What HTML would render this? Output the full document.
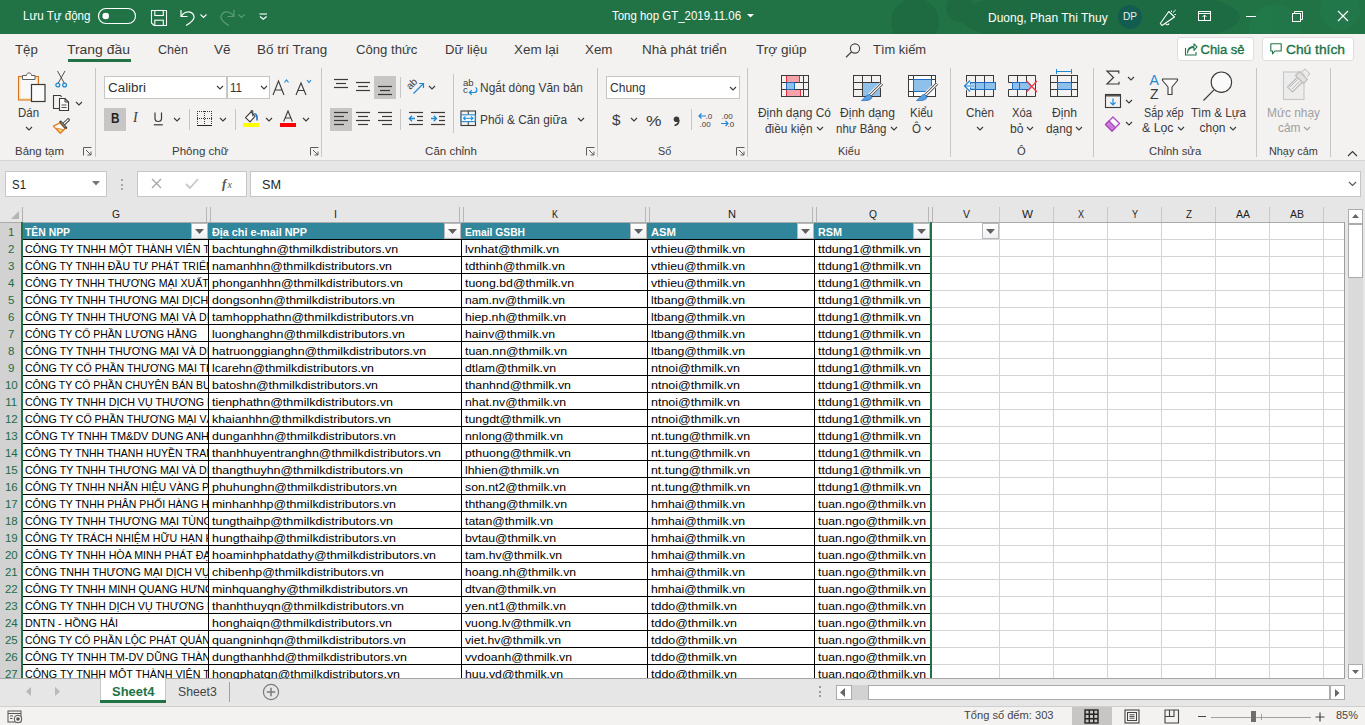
<!DOCTYPE html>
<html><head><meta charset="utf-8"><title>Excel</title>
<style>
html,body{margin:0;padding:0;}
body{width:1365px;height:725px;overflow:hidden;position:relative;background:#fff;font-family:"Liberation Sans", sans-serif;}
.t{position:absolute;white-space:pre;line-height:1;transform-origin:0 0;}
svg{overflow:visible}
</style></head><body>
<div style="position:absolute;left:0px;top:0px;width:1365px;height:34px;background:#217346;"></div>
<div style="position:absolute;left:0px;top:34px;width:1365px;height:126px;background:#f3f2f1;"></div>
<div style="position:absolute;left:0px;top:160px;width:1365px;height:1px;background:#d6d6d6;"></div>
<div style="position:absolute;left:0px;top:161px;width:1365px;height:46px;background:#e6e6e6;"></div>
<div style="position:absolute;left:0px;top:207px;width:1345px;height:15px;background:#e6e6e6;"></div>
<div style="position:absolute;left:0px;top:222px;width:1345px;height:1px;background:#ababab;"></div>
<div style="position:absolute;left:0px;top:223px;width:21px;height:455px;background:#d2d2d2;"></div>
<div style="position:absolute;left:21px;top:222px;width:2px;height:456px;background:#217346;"></div>
<div style="position:absolute;left:23px;top:223px;width:1321px;height:455px;background:#ffffff;"></div>
<div style="position:absolute;left:1344px;top:222px;width:1px;height:457px;background:#9c9c9c;"></div>
<div style="position:absolute;left:0px;top:678px;width:1345px;height:1px;background:#a6a6a6;"></div>
<div style="position:absolute;left:1345px;top:207px;width:20px;height:471px;background:#e6e6e6;"></div>
<svg style="position:absolute;left:0;top:0;overflow:hidden" width="1365" height="34"><g fill="#1d6840" opacity="0.7"><ellipse cx="1100" cy="17" rx="140" ry="30"/><circle cx="915" cy="22" r="24"/><circle cx="960" cy="8" r="14"/></g><g fill="#22794a" opacity="0.8"><circle cx="1275" cy="30" r="26"/><circle cx="1340" cy="10" r="20"/></g></svg>
<div class="t" style="left:23.00px;top:10.44px;font-size:12px;color:#fff;transform:scaleX(0.9658);">Lưu Tự động</div>
<svg style="position:absolute;left:98px;top:8px;" width="38" height="16" viewBox="0 0 38 16"><rect x="0.5" y="0.5" width="37" height="15" rx="7.5" fill="none" stroke="#fff" stroke-width="1.2"/><circle cx="7.7" cy="8" r="3.3" fill="#fff"/></svg>
<svg style="position:absolute;left:150px;top:9px;" width="18" height="18" viewBox="0 0 18 18"><path d="M1.5 1.5 H16.5 V16.5 H4 L1.5 14 Z" fill="none" stroke="#fff" stroke-width="1.1"/><rect x="4.8" y="1.5" width="8.5" height="5" fill="none" stroke="#fff" stroke-width="1.1"/><rect x="4.8" y="11.2" width="8.5" height="5.3" fill="none" stroke="#fff" stroke-width="1.1"/></svg>
<svg style="position:absolute;left:179px;top:9px;" width="18" height="18" viewBox="0 0 18 18"><path d="M2 1 V7.5 H8.5" fill="none" stroke="#fff" stroke-width="1.2"/><path d="M2.3 7.2 C5 2.5 11 1.5 14 5 C16.5 8.5 14.5 12.5 7 16.5" fill="none" stroke="#fff" stroke-width="1.2"/></svg>
<svg style="position:absolute;left:200px;top:14px;" width="7" height="4" viewBox="0 0 7 4"><path d="M0.5 0.5 L3.5 3.5 L6.5 0.5" fill="none" stroke="#fff" stroke-width="1.1"/></svg>
<svg style="position:absolute;left:218px;top:9px;" width="18" height="18" viewBox="0 0 18 18"><path d="M16 1 V7.5 H9.5" fill="none" stroke="#5c9c76" stroke-width="1.2"/><path d="M15.7 7.2 C13 2.5 7 1.5 4 5 C1.5 8.5 3.5 12.5 11 16.5" fill="none" stroke="#5c9c76" stroke-width="1.2"/></svg>
<svg style="position:absolute;left:238px;top:14px;" width="7" height="4" viewBox="0 0 7 4"><path d="M0.5 0.5 L3.5 3.5 L6.5 0.5" fill="none" stroke="#5c9c76" stroke-width="1.1"/></svg>
<svg style="position:absolute;left:259px;top:13px;" width="9" height="7" viewBox="0 0 9 7"><path d="M0.5 1 H8" stroke="#fff" stroke-width="1.1"/><path d="M1 3.5 L4.3 6.3 L7.6 3.5" fill="none" stroke="#fff" stroke-width="1.2"/></svg>
<div class="t" style="left:612.00px;top:10.44px;font-size:12px;color:#fff;transform:scaleX(0.9540);">Tong hop GT_2019.11.06</div>
<svg style="position:absolute;left:747px;top:14px;" width="7" height="4" viewBox="0 0 7 4"><polygon points="0,0 7,0 3.5,3.5" fill="#fff"/></svg>
<div class="t" style="left:988.00px;top:11.84px;font-size:12px;color:#fff;">Duong, Phan Thi Thuy</div>
<svg style="position:absolute;left:1118px;top:5px;" width="24" height="24" viewBox="0 0 24 24"><circle cx="12" cy="12" r="12" fill="#135c50"/></svg>
<div class="t" style="left:1123.20px;top:11.49px;font-size:11px;color:#e8f0ec;transform:scaleX(0.9162);">DP</div>
<svg style="position:absolute;left:1158px;top:8px;" width="20" height="20" viewBox="0 0 20 20"><path d="M10.8 3.5 L16.5 9 L4 17.5 L2.3 15.5 Z" fill="none" stroke="#fff" stroke-width="1.1" stroke-linejoin="round"/><path d="M7.5 15 A1.8 1.8 0 0 0 11 15.5" fill="none" stroke="#fff" stroke-width="1.1"/><path d="M13.5 2.5 V4 M15 4.5 L17.7 2 M16.5 6.5 H18" stroke="#fff" stroke-width="1"/></svg>
<svg style="position:absolute;left:1197px;top:10px;" width="15" height="12" viewBox="0 0 15 12"><rect x="1.5" y="1.5" width="12" height="9" fill="none" stroke="#fff" stroke-width="1"/><path d="M1.5 3.5 H13.5" stroke="#fff" stroke-width="1"/><path d="M7.5 10.5 V5 M5.5 7 L7.5 5 L9.5 7" fill="none" stroke="#fff" stroke-width="1"/></svg>
<div style="position:absolute;left:1246px;top:16px;width:10px;height:1px;background:#fff;"></div>
<svg style="position:absolute;left:1291px;top:10px;" width="13" height="12" viewBox="0 0 13 12"><rect x="1.5" y="3.5" width="8" height="8" fill="none" stroke="#fff" stroke-width="1"/><path d="M3.5 3.5 V1.5 H11.5 V9.5 H9.5" fill="none" stroke="#fff" stroke-width="1"/></svg>
<svg style="position:absolute;left:1337px;top:10px;" width="12" height="12" viewBox="0 0 12 12"><path d="M1 1 L11 11 M11 1 L1 11" stroke="#fff" stroke-width="1.2"/></svg>
<div class="t" style="left:15.40px;top:43.00px;font-size:13px;color:#3b3a39;transform:scaleX(1.0176);">Tệp</div>
<div class="t" style="left:67.30px;top:43.00px;font-size:13px;color:#3b3a39;transform:scaleX(1.0701);">Trang đầu</div>
<div class="t" style="left:157.50px;top:43.00px;font-size:13px;color:#3b3a39;transform:scaleX(0.9621);">Chèn</div>
<div class="t" style="left:214.10px;top:43.00px;font-size:13px;color:#3b3a39;transform:scaleX(1.0436);">Vẽ</div>
<div class="t" style="left:257.20px;top:43.00px;font-size:13px;color:#3b3a39;transform:scaleX(1.0335);">Bố trí Trang</div>
<div class="t" style="left:356.30px;top:43.00px;font-size:13px;color:#3b3a39;transform:scaleX(1.0110);">Công thức</div>
<div class="t" style="left:445.30px;top:43.00px;font-size:13px;color:#3b3a39;transform:scaleX(1.0107);">Dữ liệu</div>
<div class="t" style="left:514.20px;top:43.00px;font-size:13px;color:#3b3a39;transform:scaleX(1.0332);">Xem lại</div>
<div class="t" style="left:584.90px;top:43.00px;font-size:13px;color:#3b3a39;transform:scaleX(1.0286);">Xem</div>
<div class="t" style="left:641.80px;top:43.00px;font-size:13px;color:#3b3a39;transform:scaleX(1.0395);">Nhà phát triển</div>
<div class="t" style="left:755.70px;top:43.00px;font-size:13px;color:#3b3a39;transform:scaleX(1.0430);">Trợ giúp</div>
<div class="t" style="left:873.30px;top:43.00px;font-size:13px;color:#3b3a39;transform:scaleX(0.9934);">Tìm kiếm</div>
<div style="position:absolute;left:68px;top:59px;width:63px;height:3px;background:#217346;"></div>
<svg style="position:absolute;left:845px;top:43px;" width="16" height="15" viewBox="0 0 16 15"><circle cx="10" cy="5.5" r="4.6" fill="none" stroke="#444" stroke-width="1.1"/><path d="M6.7 8.8 L1 14.2" stroke="#444" stroke-width="1.2"/></svg>
<div style="position:absolute;left:1177px;top:37px;width:77px;height:24px;box-sizing:border-box;border:1px solid #e1dfdd;background:#fff;border-radius:3px;"></div>
<svg style="position:absolute;left:1184px;top:43px;" width="14" height="13" viewBox="0 0 14 13"><path d="M1.5 5 V12 H12 V9" fill="none" stroke="#217346" stroke-width="1.1"/><path d="M3.5 10 C4 6 6.5 4.5 10 4.5 V7.5 L13 3.8 L10 0.8 V3.2 C6 3.5 3.5 6 3.5 10 Z" fill="none" stroke="#217346" stroke-width="1.1" stroke-linejoin="round"/></svg>
<div class="t" style="left:1200.50px;top:43.10px;font-size:13px;color:#217346;-webkit-text-stroke:0.35px #217346;">Chia sẻ</div>
<div style="position:absolute;left:1262px;top:37px;width:92px;height:24px;box-sizing:border-box;border:1px solid #e1dfdd;background:#fff;border-radius:3px;"></div>
<svg style="position:absolute;left:1270px;top:43px;" width="13" height="12" viewBox="0 0 13 12"><path d="M0.8 0.8 H11.2 V8 H5 L2.5 10.8 V8 H0.8 Z" fill="none" stroke="#217346" stroke-width="1.1" stroke-linejoin="round"/></svg>
<div class="t" style="left:1285.50px;top:43.10px;font-size:13px;color:#217346;transform:scaleX(1.0601);-webkit-text-stroke:0.35px #217346;">Chú thích</div>
<svg style="position:absolute;left:17px;top:71px;" width="30" height="32" viewBox="0 0 30 32"><rect x="1.5" y="5.5" width="20" height="23.5" fill="#fbe3b1" stroke="#d47724" stroke-width="1.1"/><rect x="3.5" y="7.5" width="16" height="19.5" fill="#f8f8f8"/><path d="M5.5 8.5 V4.5 H9.5 C9.5 1 14.5 1 14.5 4.5 H18 V8.5 Z" fill="#fff" stroke="#605e5c" stroke-width="1"/><rect x="14.5" y="13.5" width="13.5" height="17" fill="#fafafa" stroke="#3b3a39" stroke-width="1.2"/></svg>
<div class="t" style="left:18.00px;top:106.54px;font-size:12px;color:#3b3a39;transform:scaleX(0.9539);">Dán</div>
<svg style="position:absolute;left:24.5px;top:126.0px;" width="8" height="5" viewBox="0 0 8 5"><path d="M1 1 L4.0 4 L7 1" fill="none" stroke="#3b3a39" stroke-width="1.1"/></svg>
<svg style="position:absolute;left:55px;top:70px;" width="13" height="18" viewBox="0 0 13 18"><path d="M2.5 1 L9.5 13.5 M10 1 L3 13.5" stroke="#505050" stroke-width="1"/><circle cx="2.8" cy="15" r="1.9" fill="none" stroke="#1e88d6" stroke-width="1.3"/><circle cx="9.6" cy="15" r="1.9" fill="none" stroke="#1e88d6" stroke-width="1.3"/></svg>
<svg style="position:absolute;left:52px;top:94px;" width="19" height="18" viewBox="0 0 19 18"><path d="M7.5 14.5 H1.5 V1.5 H8.5 L9.5 3" fill="none" stroke="#3b3a39" stroke-width="1.1"/><path d="M7.5 4.5 H13 L16.5 8 V16.5 H7.5 Z" fill="#fafafa" stroke="#3b3a39" stroke-width="1.1"/><path d="M13 4.5 V8 H16.5" fill="none" stroke="#3b3a39" stroke-width="1"/><path d="M9.5 11 H14.5 M9.5 13.5 H14.5" stroke="#3b3a39" stroke-width="0.9"/></svg>
<svg style="position:absolute;left:75.0px;top:100.8px;" width="8" height="5" viewBox="0 0 8 5"><path d="M1 1 L4.0 4 L7 1" fill="none" stroke="#3b3a39" stroke-width="1.1"/></svg>
<svg style="position:absolute;left:52px;top:118px;" width="18" height="17" viewBox="0 0 18 17"><path d="M1.4 8.1 L8 4.9 L13 10.7 L8.3 15.4 Z" fill="#fff" stroke="#e07b1f" stroke-width="1.3" stroke-linejoin="round"/><path d="M4.2 10.2 C7 10.5 9 11 11.3 11.8 L8.3 14.6 Z" fill="#f9d27e" stroke="#e07b1f" stroke-width="0.8"/><path d="M12 5.8 L16.3 1.8" stroke="#3b3a39" stroke-width="3.2" stroke-linecap="round"/><path d="M12 5.8 L16.3 1.8" stroke="#fff" stroke-width="1.2" stroke-linecap="round"/><path d="M8.5 3.8 L14 9.8" stroke="#3b3a39" stroke-width="2.4" stroke-linecap="round"/><path d="M9 4.3 L13.5 9.3" stroke="#fff" stroke-width="0.6"/></svg>
<div class="t" style="left:14.90px;top:146.47px;font-size:11.5px;color:#3b3a39;transform:scaleX(0.9952);">Bảng tạm</div>
<svg style="position:absolute;left:83px;top:147px;" width="9" height="9" viewBox="0 0 9 9"><path d="M0.5 8.5 V0.5 H8.5" fill="none" stroke="#605e5c" stroke-width="1"/><path d="M3 3 L8 8 M8 4.5 V8 H4.5" fill="none" stroke="#605e5c" stroke-width="1"/></svg>
<div style="position:absolute;left:95px;top:68px;width:1px;height:89px;background:#c8c6c4;"></div>
<div style="position:absolute;left:104px;top:76px;width:123px;height:23px;box-sizing:border-box;border:1px solid #c8c6c4;background:#fff;"></div>
<div style="position:absolute;left:227px;top:76px;width:43px;height:23px;box-sizing:border-box;border:1px solid #c8c6c4;background:#fff;"></div>
<div class="t" style="left:107.50px;top:81.64px;font-size:12px;color:#323130;transform:scaleX(1.1171);">Calibri</div>
<svg style="position:absolute;left:216.3px;top:85.3px;" width="8" height="5" viewBox="0 0 8 5"><path d="M1 1 L4.0 4 L7 1" fill="none" stroke="#3b3a39" stroke-width="1.1"/></svg>
<div class="t" style="left:230.00px;top:81.64px;font-size:12px;color:#323130;transform:scaleX(0.9624);">11</div>
<svg style="position:absolute;left:259.5px;top:85.3px;" width="8" height="5" viewBox="0 0 8 5"><path d="M1 1 L4.0 4 L7 1" fill="none" stroke="#3b3a39" stroke-width="1.1"/></svg>
<svg style="position:absolute;left:272px;top:78px;" width="18" height="18" viewBox="0 0 18 18"><path d="M1 17 L6.5 3 L12 17 M3 12 H10" fill="none" stroke="#3b3a39" stroke-width="1.1"/><path d="M12.5 4.5 L14.5 2 L16.5 4.5" fill="none" stroke="#1e88d6" stroke-width="1.1"/></svg>
<svg style="position:absolute;left:295px;top:78px;" width="18" height="18" viewBox="0 0 18 18"><path d="M1 17 L6 5 L11 17 M2.8 12.5 H9.2" fill="none" stroke="#3b3a39" stroke-width="1.1"/><path d="M12 2 L14 4.5 L16 2" fill="none" stroke="#1e88d6" stroke-width="1.1"/></svg>
<div style="position:absolute;left:104px;top:108px;width:22px;height:23px;background:#c8c6c4;"></div>
<div class="t" style="left:111.30px;top:111.15px;font-size:14px;color:#252423;font-weight:700;transform:scaleX(0.8395);">B</div>
<div class="t" style="left:133px;top:111.2px;font-size:14px;font-family:'Liberation Serif',serif;font-style:italic;color:#3b3a39;">I</div>
<svg style="position:absolute;left:153px;top:112px;" width="11" height="14" viewBox="0 0 11 14"><path d="M2 0.5 V6.5 C2 10.5 8.5 10.5 8.5 6.5 V0.5" fill="none" stroke="#3b3a39" stroke-width="1.2"/><path d="M0.8 12.8 H9.8" stroke="#3b3a39" stroke-width="1.2"/></svg>
<svg style="position:absolute;left:172.7px;top:117.0px;" width="8" height="5" viewBox="0 0 8 5"><path d="M1 1 L4.0 4 L7 1" fill="none" stroke="#3b3a39" stroke-width="1.1"/></svg>
<div style="position:absolute;left:189px;top:109px;width:1px;height:21px;background:#c8c6c4;"></div>
<svg style="position:absolute;left:196px;top:110px;" width="17" height="17" viewBox="0 0 17 17"><g shape-rendering="crispEdges"><rect x="1" y="1" width="1" height="1" fill="#3b3a39"/><rect x="1" y="3" width="1" height="1" fill="#3b3a39"/><rect x="1" y="5" width="1" height="1" fill="#3b3a39"/><rect x="1" y="7" width="1" height="1" fill="#3b3a39"/><rect x="1" y="8" width="1" height="1" fill="#3b3a39"/><rect x="1" y="9" width="1" height="1" fill="#3b3a39"/><rect x="1" y="11" width="1" height="1" fill="#3b3a39"/><rect x="1" y="13" width="1" height="1" fill="#3b3a39"/><rect x="3" y="1" width="1" height="1" fill="#3b3a39"/><rect x="3" y="8" width="1" height="1" fill="#3b3a39"/><rect x="5" y="1" width="1" height="1" fill="#3b3a39"/><rect x="5" y="8" width="1" height="1" fill="#3b3a39"/><rect x="7" y="1" width="1" height="1" fill="#3b3a39"/><rect x="7" y="8" width="1" height="1" fill="#3b3a39"/><rect x="8" y="1" width="1" height="1" fill="#3b3a39"/><rect x="8" y="3" width="1" height="1" fill="#3b3a39"/><rect x="8" y="5" width="1" height="1" fill="#3b3a39"/><rect x="8" y="7" width="1" height="1" fill="#3b3a39"/><rect x="8" y="9" width="1" height="1" fill="#3b3a39"/><rect x="8" y="11" width="1" height="1" fill="#3b3a39"/><rect x="8" y="13" width="1" height="1" fill="#3b3a39"/><rect x="9" y="1" width="1" height="1" fill="#3b3a39"/><rect x="9" y="8" width="1" height="1" fill="#3b3a39"/><rect x="11" y="1" width="1" height="1" fill="#3b3a39"/><rect x="11" y="8" width="1" height="1" fill="#3b3a39"/><rect x="13" y="1" width="1" height="1" fill="#3b3a39"/><rect x="13" y="8" width="1" height="1" fill="#3b3a39"/><rect x="15" y="1" width="1" height="1" fill="#3b3a39"/><rect x="15" y="3" width="1" height="1" fill="#3b3a39"/><rect x="15" y="5" width="1" height="1" fill="#3b3a39"/><rect x="15" y="7" width="1" height="1" fill="#3b3a39"/><rect x="15" y="8" width="1" height="1" fill="#3b3a39"/><rect x="15" y="9" width="1" height="1" fill="#3b3a39"/><rect x="15" y="11" width="1" height="1" fill="#3b3a39"/><rect x="15" y="13" width="1" height="1" fill="#3b3a39"/><rect x="1" y="15" width="15" height="1.2" fill="#252423"/></g></svg>
<svg style="position:absolute;left:218.5px;top:117.0px;" width="8" height="5" viewBox="0 0 8 5"><path d="M1 1 L4.0 4 L7 1" fill="none" stroke="#3b3a39" stroke-width="1.1"/></svg>
<div style="position:absolute;left:235px;top:109px;width:1px;height:21px;background:#c8c6c4;"></div>
<svg style="position:absolute;left:243px;top:109px;" width="17" height="18" viewBox="0 0 17 18"><path d="M2.5 8.6 L8 3 L12 7.3 L7 12.9 Z" fill="#fff" stroke="#3b3a39" stroke-width="1.1" stroke-linejoin="round"/><path d="M8 3 C8 1.3 9.8 1.2 9.8 2.8 V7.2" fill="none" stroke="#3b3a39" stroke-width="1.1"/><path d="M11.2 4.8 C13.2 4.8 14.6 6.5 14 11.5" fill="none" stroke="#1e6cc4" stroke-width="1.6"/><rect x="0" y="14" width="16" height="4" fill="#ffff00"/></svg>
<svg style="position:absolute;left:264.5px;top:117.0px;" width="8" height="5" viewBox="0 0 8 5"><path d="M1 1 L4.0 4 L7 1" fill="none" stroke="#3b3a39" stroke-width="1.1"/></svg>
<svg style="position:absolute;left:280px;top:109px;" width="17" height="18" viewBox="0 0 17 18"><path d="M3.6 12.6 L8 2 L12.4 12.6 M5.2 9 H10.8" fill="none" stroke="#3b3a39" stroke-width="1.1"/><rect x="0" y="14" width="16" height="4" fill="#ff0000"/></svg>
<svg style="position:absolute;left:301.5px;top:117.0px;" width="8" height="5" viewBox="0 0 8 5"><path d="M1 1 L4.0 4 L7 1" fill="none" stroke="#3b3a39" stroke-width="1.1"/></svg>
<div class="t" style="left:172.00px;top:146.47px;font-size:11.5px;color:#3b3a39;transform:scaleX(1.0036);">Phông chữ</div>
<svg style="position:absolute;left:310px;top:147px;" width="9" height="9" viewBox="0 0 9 9"><path d="M0.5 8.5 V0.5 H8.5" fill="none" stroke="#605e5c" stroke-width="1"/><path d="M3 3 L8 8 M8 4.5 V8 H4.5" fill="none" stroke="#605e5c" stroke-width="1"/></svg>
<div style="position:absolute;left:321px;top:68px;width:1px;height:89px;background:#c8c6c4;"></div>
<svg style="position:absolute;left:0px;top:0px;" width="1" height="1" viewBox="0 0 1 1"></svg>
<svg style="position:absolute;left:0;top:0" width="1365" height="160"><path d="M334 79.5 H348" stroke="#3b3a39" stroke-width="1.2"/><path d="M336 83.5 H346" stroke="#3b3a39" stroke-width="1.2"/><path d="M334 87.5 H348" stroke="#3b3a39" stroke-width="1.2"/><path d="M356 82.5 H370" stroke="#3b3a39" stroke-width="1.2"/><path d="M358 86.5 H368" stroke="#3b3a39" stroke-width="1.2"/><path d="M356 90.5 H370" stroke="#3b3a39" stroke-width="1.2"/></svg>
<div style="position:absolute;left:374px;top:76px;width:22px;height:23px;background:#c8c6c4;"></div>
<div style="position:absolute;left:330px;top:108px;width:22px;height:23px;background:#c8c6c4;"></div>
<svg style="position:absolute;left:0;top:0" width="1365" height="160"><path d="M378 86.5 H392" stroke="#3b3a39" stroke-width="1.2"/><path d="M380 90.5 H390" stroke="#3b3a39" stroke-width="1.2"/><path d="M378 94.5 H392" stroke="#3b3a39" stroke-width="1.2"/><path d="M334 112.5 H348" stroke="#3b3a39" stroke-width="1.2"/><path d="M334 116.5 H344" stroke="#3b3a39" stroke-width="1.2"/><path d="M334 120.5 H348" stroke="#3b3a39" stroke-width="1.2"/><path d="M334 124.5 H344" stroke="#3b3a39" stroke-width="1.2"/><path d="M356 112.5 H370" stroke="#3b3a39" stroke-width="1.2"/><path d="M358 116.5 H368" stroke="#3b3a39" stroke-width="1.2"/><path d="M356 120.5 H370" stroke="#3b3a39" stroke-width="1.2"/><path d="M358 124.5 H368" stroke="#3b3a39" stroke-width="1.2"/><path d="M378 112.5 H392" stroke="#3b3a39" stroke-width="1.2"/><path d="M382 116.5 H392" stroke="#3b3a39" stroke-width="1.2"/><path d="M378 120.5 H392" stroke="#3b3a39" stroke-width="1.2"/><path d="M382 124.5 H392" stroke="#3b3a39" stroke-width="1.2"/><path d="M409 112.5 H423" stroke="#3b3a39" stroke-width="1.2"/><path d="M417 116.5 H423" stroke="#3b3a39" stroke-width="1.2"/><path d="M417 120.5 H423" stroke="#3b3a39" stroke-width="1.2"/><path d="M409 124.5 H423" stroke="#3b3a39" stroke-width="1.2"/><path d="M431 112.5 H445" stroke="#3b3a39" stroke-width="1.2"/><path d="M439 116.5 H445" stroke="#3b3a39" stroke-width="1.2"/><path d="M439 120.5 H445" stroke="#3b3a39" stroke-width="1.2"/><path d="M431 124.5 H445" stroke="#3b3a39" stroke-width="1.2"/><path d="M409.5 118.5 H415 M412 115.8 L409.3 118.5 L412 121.2" fill="none" stroke="#1e88d6" stroke-width="1.3"/><path d="M431 118.5 H436.5 M433.8 115.8 L436.5 118.5 L433.8 121.2" fill="none" stroke="#1e88d6" stroke-width="1.3"/><path d="M413.5 93.5 L423.5 83.5 M419 83.5 H423.5 V88" fill="none" stroke="#1e88d6" stroke-width="1.2"/></svg>
<div class="t" style="left:406px;top:78px;font-size:10px;color:#3b3a39;transform:rotate(-45deg);transform-origin:50% 50%;width:14px;height:10px">ab</div>
<svg style="position:absolute;left:427.5px;top:85.0px;" width="8" height="5" viewBox="0 0 8 5"><path d="M1 1 L4.0 4 L7 1" fill="none" stroke="#3b3a39" stroke-width="1.1"/></svg>
<div style="position:absolute;left:400px;top:77px;width:1px;height:21px;background:#c8c6c4;"></div>
<div style="position:absolute;left:400px;top:109px;width:1px;height:21px;background:#c8c6c4;"></div>
<div style="position:absolute;left:453px;top:74px;width:1px;height:59px;background:#c8c6c4;"></div>
<svg style="position:absolute;left:462px;top:79px;" width="17" height="17" viewBox="0 0 17 17"><text x="1" y="7.2" font-size="9.5" font-family="Liberation Sans" fill="#3b3a39">ab</text><text x="1" y="14.3" font-size="9.5" font-family="Liberation Sans" fill="#3b3a39">c</text><path d="M13.5 8.5 C15.5 9 15.5 13.5 12.5 13.5 H7.5 M9.8 11.2 L7.3 13.5 L9.8 15.8" fill="none" stroke="#1e88d6" stroke-width="1.2"/></svg>
<div class="t" style="left:480.00px;top:81.64px;font-size:12px;color:#3b3a39;transform:scaleX(0.9959);">Ngắt dòng Văn bản</div>
<svg style="position:absolute;left:460px;top:110px;" width="17" height="17" viewBox="0 0 17 17"><rect x="1" y="1" width="14.5" height="14.5" fill="none" stroke="#3b3a39" stroke-width="1.1"/><path d="M8.25 1 V4.5 M8.25 12 V15.5" stroke="#3b3a39" stroke-width="1"/><rect x="1.2" y="4.8" width="14" height="6.8" fill="#fff" stroke="#1e88d6" stroke-width="1.1"/><path d="M3.5 8.2 H13 M5.5 6.3 L3.5 8.2 L5.5 10.1 M11 6.3 L13 8.2 L11 10.1" fill="none" stroke="#1e88d6" stroke-width="1.1"/></svg>
<div class="t" style="left:480.00px;top:113.54px;font-size:12px;color:#3b3a39;transform:scaleX(0.9876);">Phối &amp; Căn giữa</div>
<svg style="position:absolute;left:576.5px;top:117.2px;" width="8" height="5" viewBox="0 0 8 5"><path d="M1 1 L4.0 4 L7 1" fill="none" stroke="#3b3a39" stroke-width="1.1"/></svg>
<div class="t" style="left:425.10px;top:146.47px;font-size:11.5px;color:#3b3a39;">Căn chỉnh</div>
<svg style="position:absolute;left:586px;top:147px;" width="9" height="9" viewBox="0 0 9 9"><path d="M0.5 8.5 V0.5 H8.5" fill="none" stroke="#605e5c" stroke-width="1"/><path d="M3 3 L8 8 M8 4.5 V8 H4.5" fill="none" stroke="#605e5c" stroke-width="1"/></svg>
<div style="position:absolute;left:597px;top:68px;width:1px;height:89px;background:#c8c6c4;"></div>
<div style="position:absolute;left:606px;top:76px;width:134px;height:23px;box-sizing:border-box;border:1px solid #c8c6c4;background:#fff;"></div>
<div class="t" style="left:609.50px;top:82.14px;font-size:12px;color:#323130;transform:scaleX(1.0035);">Chung</div>
<svg style="position:absolute;left:729.0px;top:86.0px;" width="8" height="5" viewBox="0 0 8 5"><path d="M1 1 L4.0 4 L7 1" fill="none" stroke="#3b3a39" stroke-width="1.1"/></svg>
<div class="t" style="left:612.20px;top:112.30px;font-size:15px;color:#3b3a39;transform:scaleX(1.0187);">$</div>
<svg style="position:absolute;left:630.3px;top:117.0px;" width="8" height="5" viewBox="0 0 8 5"><path d="M1 1 L4.0 4 L7 1" fill="none" stroke="#3b3a39" stroke-width="1.1"/></svg>
<div class="t" style="left:645.80px;top:112.80px;font-size:15px;color:#3b3a39;transform:scaleX(1.1616);">%</div>
<svg style="position:absolute;left:672px;top:116px;" width="9" height="10" viewBox="0 0 9 10"><circle cx="4.5" cy="3.3" r="2.8" fill="#3b3a39"/><path d="M6.8 4 C7 7 5 9 2.5 9.5" fill="none" stroke="#3b3a39" stroke-width="1.6"/></svg>
<div style="position:absolute;left:691px;top:109px;width:1px;height:21px;background:#c8c6c4;"></div>
<svg style="position:absolute;left:698px;top:112px;" width="17" height="16" viewBox="0 0 17 16"><path d="M1 4 H8 M3.5 1.5 L1 4 L3.5 6.5" fill="none" stroke="#1e88d6" stroke-width="1.2"/><text x="7.5" y="7" font-size="8" font-family="Liberation Sans" fill="#3b3a39">.0</text><text x="1.5" y="14.5" font-size="8" font-family="Liberation Sans" fill="#3b3a39">.00</text></svg>
<svg style="position:absolute;left:720px;top:112px;" width="17" height="16" viewBox="0 0 17 16"><text x="1.5" y="7" font-size="8" font-family="Liberation Sans" fill="#3b3a39">.00</text><path d="M1 11.5 H8 M5.5 9 L8 11.5 L5.5 14" fill="none" stroke="#1e88d6" stroke-width="1.2"/><text x="7.5" y="14.5" font-size="8" font-family="Liberation Sans" fill="#3b3a39">.0</text></svg>
<div class="t" style="left:657.90px;top:146.47px;font-size:11.5px;color:#3b3a39;transform:scaleX(0.9376);">Số</div>
<svg style="position:absolute;left:736px;top:147px;" width="9" height="9" viewBox="0 0 9 9"><path d="M0.5 8.5 V0.5 H8.5" fill="none" stroke="#605e5c" stroke-width="1"/><path d="M3 3 L8 8 M8 4.5 V8 H4.5" fill="none" stroke="#605e5c" stroke-width="1"/></svg>
<div style="position:absolute;left:747px;top:68px;width:1px;height:89px;background:#c8c6c4;"></div>
<svg style="position:absolute;left:780px;top:74px;" width="30" height="24" viewBox="0 0 30 24"><rect x="6.5" y="1.5" width="13" height="7" fill="#f4a3ab"/><rect x="6.5" y="15.5" width="14" height="7" fill="#f4a3ab"/><rect x="6.5" y="8.5" width="8" height="7" fill="#8ec0ea"/><path d="M6.5 1.5 H19.5 V8.5 H6.5 Z M6.5 15.5 H20.5 V22.5 H6.5 Z" fill="none" stroke="#e0303a" stroke-width="1"/><path d="M6.5 8.5 H14.5 V15.5 H6.5 Z" fill="none" stroke="#1e6cc4" stroke-width="1"/><rect x="1.5" y="1.5" width="27" height="21" fill="none" stroke="#3b3a39" stroke-width="1"/><path d="M1.5 8.5 H6.5 M19.5 8.5 H28.5 M1.5 15.5 H6.5 M14.5 15.5 H28.5 M23.5 1.5 V22.5 M14.5 8.5 H19.5 M1.5 8.5 V15.5" stroke="#3b3a39" stroke-width="1"/></svg>
<div class="t" style="left:757.50px;top:107.04px;font-size:12px;color:#3b3a39;transform:scaleX(0.9947);">Định dạng Có</div>
<div class="t" style="left:765.30px;top:122.54px;font-size:12px;color:#3b3a39;transform:scaleX(0.9886);">điều kiện</div>
<svg style="position:absolute;left:815.7px;top:126.0px;" width="8" height="5" viewBox="0 0 8 5"><path d="M1 1 L4.0 4 L7 1" fill="none" stroke="#3b3a39" stroke-width="1.1"/></svg>
<svg style="position:absolute;left:852px;top:74px;" width="32" height="28" viewBox="0 0 32 28"><rect x="10.5" y="8.5" width="18" height="14" fill="#8ec0ea" stroke="#1e6cc4" stroke-width="1"/><rect x="1.5" y="1.5" width="27" height="21" fill="none" stroke="#3b3a39" stroke-width="1"/><path d="M1.5 8.5 H28.5 M1.5 15.5 H10.5 M10.5 1.5 V22.5 M19.5 1.5 V8.5" stroke="#3b3a39" stroke-width="1"/><path d="M29.5 10 L17 22" stroke="#f3f2f1" stroke-width="4.5"/><path d="M30 9.8 L17.5 22.2" stroke="#3b3a39" stroke-width="3"/><path d="M29.8 10 L17.7 22" stroke="#fff" stroke-width="1.3"/><path d="M17.5 20.5 C14.5 20.5 13 24 9.5 26.5 C15 27 19.5 26 20 23 Z" fill="#5a9fe0" stroke="#1e6cc4" stroke-width="0.8"/></svg>
<div class="t" style="left:839.60px;top:107.04px;font-size:12px;color:#3b3a39;transform:scaleX(1.0051);">Định dạng</div>
<div class="t" style="left:836.00px;top:122.54px;font-size:12px;color:#3b3a39;transform:scaleX(0.9573);">như Bảng</div>
<svg style="position:absolute;left:889.7px;top:126.0px;" width="8" height="5" viewBox="0 0 8 5"><path d="M1 1 L4.0 4 L7 1" fill="none" stroke="#3b3a39" stroke-width="1.1"/></svg>
<svg style="position:absolute;left:907px;top:74px;" width="32" height="28" viewBox="0 0 32 28"><rect x="1.5" y="1.5" width="27" height="21" fill="#fff" stroke="#3b3a39" stroke-width="1"/><path d="M1.5 5.5 H28.5 M1.5 17.5 H6.5 M6.5 1.5 V22.5 M24.5 1.5 V5.5" stroke="#3b3a39" stroke-width="1"/><rect x="6.5" y="5.5" width="18" height="12" fill="#8ec0ea" stroke="#1e6cc4" stroke-width="1"/><path d="M29.5 10 L17 22" stroke="#f3f2f1" stroke-width="4.5"/><path d="M30 9.8 L17.5 22.2" stroke="#3b3a39" stroke-width="3"/><path d="M29.8 10 L17.7 22" stroke="#fff" stroke-width="1.3"/><path d="M17.5 20.5 C14.5 20.5 13 24 9.5 26.5 C15 27 19.5 26 20 23 Z" fill="#5a9fe0" stroke="#1e6cc4" stroke-width="0.8"/></svg>
<div class="t" style="left:910.00px;top:107.04px;font-size:12px;color:#3b3a39;transform:scaleX(0.9571);">Kiểu</div>
<div class="t" style="left:912.20px;top:122.54px;font-size:12px;color:#3b3a39;transform:scaleX(0.9632);">Ô</div>
<svg style="position:absolute;left:923.5px;top:126.0px;" width="8" height="5" viewBox="0 0 8 5"><path d="M1 1 L4.0 4 L7 1" fill="none" stroke="#3b3a39" stroke-width="1.1"/></svg>
<div class="t" style="left:838.00px;top:146.47px;font-size:11.5px;color:#3b3a39;transform:scaleX(0.9552);">Kiểu</div>
<div style="position:absolute;left:950px;top:68px;width:1px;height:89px;background:#c8c6c4;"></div>
<svg style="position:absolute;left:962px;top:73px;" width="36" height="26" viewBox="0 0 36 26"><rect x="4.5" y="2.5" width="27" height="21" fill="none" stroke="#3b3a39" stroke-width="1"/><path d="M13.5 2.5 V23.5 M22.5 2.5 V23.5" stroke="#3b3a39" stroke-width="1"/><rect x="8.5" y="9.5" width="25" height="7" fill="#8ec0ea" stroke="#1e6cc4" stroke-width="1"/><path d="M13.5 9.5 V16.5 M22.5 9.5 V16.5" stroke="#1e6cc4" stroke-width="1"/><path d="M2.5 13 H12.5 M8 7.5 L2.5 13 L8 18.5" fill="none" stroke="#f3f2f1" stroke-width="3"/><path d="M2.5 13 H12.5 M8 7.5 L2.5 13 L8 18.5" fill="none" stroke="#1e88d6" stroke-width="1.2"/></svg>
<div class="t" style="left:966.00px;top:107.04px;font-size:12px;color:#3b3a39;transform:scaleX(0.9760);">Chèn</div>
<svg style="position:absolute;left:975.6px;top:126.0px;" width="8" height="5" viewBox="0 0 8 5"><path d="M1 1 L4.0 4 L7 1" fill="none" stroke="#3b3a39" stroke-width="1.1"/></svg>
<svg style="position:absolute;left:1006px;top:73px;" width="34" height="26" viewBox="0 0 34 26"><path d="M2.5 9.5 V2.5 H29.5 V23.5 H2.5 V16.5" fill="none" stroke="#3b3a39" stroke-width="1"/><path d="M11.5 2.5 V23.5 M20.5 2.5 V23.5 M2.5 9.5 H6.5 M2.5 16.5 H6.5" stroke="#3b3a39" stroke-width="1"/><path d="M6.5 9.5 H22.5 L26 13 L22.5 16.5 H6.5 Z" fill="#8ec0ea" stroke="#1e6cc4" stroke-width="1"/><path d="M13.5 9.5 V16.5" stroke="#1e6cc4" stroke-width="1"/><path d="M20.5 8 L31 19 M31 8 L20.5 19" stroke="#f03a46" stroke-width="1.2"/></svg>
<div class="t" style="left:1012.00px;top:107.04px;font-size:12px;color:#3b3a39;transform:scaleX(0.9364);">Xóa</div>
<div class="t" style="left:1009.50px;top:122.54px;font-size:12px;color:#3b3a39;transform:scaleX(1.0105);">bỏ</div>
<svg style="position:absolute;left:1025.5px;top:126.0px;" width="8" height="5" viewBox="0 0 8 5"><path d="M1 1 L4.0 4 L7 1" fill="none" stroke="#3b3a39" stroke-width="1.1"/></svg>
<svg style="position:absolute;left:1049px;top:69px;" width="31" height="30" viewBox="0 0 31 30"><path d="M7.5 2.5 H22.5 M7.5 0 V5 M22.5 0 V5" stroke="#1e88d6" stroke-width="1"/><rect x="1.5" y="6.5" width="27" height="21" fill="none" stroke="#3b3a39" stroke-width="1"/><path d="M1.5 13.5 H28.5 M1.5 20.5 H28.5 M8.5 6.5 V27.5 M22.5 6.5 V27.5" stroke="#3b3a39" stroke-width="1"/><rect x="8.5" y="13.5" width="14" height="7" fill="#8ec0ea" stroke="#1e6cc4" stroke-width="1"/></svg>
<div class="t" style="left:1051.50px;top:107.04px;font-size:12px;color:#3b3a39;transform:scaleX(1.0127);">Định</div>
<div class="t" style="left:1045.50px;top:122.54px;font-size:12px;color:#3b3a39;transform:scaleX(0.9924);">dạng</div>
<svg style="position:absolute;left:1074.7px;top:126.0px;" width="8" height="5" viewBox="0 0 8 5"><path d="M1 1 L4.0 4 L7 1" fill="none" stroke="#3b3a39" stroke-width="1.1"/></svg>
<div class="t" style="left:1017.30px;top:146.47px;font-size:11.5px;color:#3b3a39;transform:scaleX(0.9717);">Ô</div>
<div style="position:absolute;left:1093px;top:68px;width:1px;height:89px;background:#c8c6c4;"></div>
<svg style="position:absolute;left:1105px;top:70px;" width="16" height="16" viewBox="0 0 16 16"><path d="M13.8 3.5 V1.2 H2 L8.5 7.5 L2 14 H14 V11.8" fill="none" stroke="#3b3a39" stroke-width="1.2"/></svg>
<svg style="position:absolute;left:1126.5px;top:76.0px;" width="8" height="5" viewBox="0 0 8 5"><path d="M1 1 L4.0 4 L7 1" fill="none" stroke="#3b3a39" stroke-width="1.1"/></svg>
<svg style="position:absolute;left:1104px;top:93px;" width="18" height="16" viewBox="0 0 18 16"><rect x="1.5" y="1.5" width="15" height="13" fill="none" stroke="#3b3a39" stroke-width="1.1"/><path d="M1.5 2.8 H16.5" stroke="#3b3a39" stroke-width="1.3"/><path d="M9 5.5 V12 M6.3 9.3 L9 12 L11.7 9.3" fill="none" stroke="#1e88d6" stroke-width="1.2"/></svg>
<svg style="position:absolute;left:1124.5px;top:98.7px;" width="8" height="5" viewBox="0 0 8 5"><path d="M1 1 L4.0 4 L7 1" fill="none" stroke="#3b3a39" stroke-width="1.1"/></svg>
<svg style="position:absolute;left:1104px;top:115px;" width="17" height="18" viewBox="0 0 17 18"><path d="M1.5 9.5 L9 2 L15.5 8.5 L8 16 Z" fill="#fff" stroke="#b146c2" stroke-width="1.3" stroke-linejoin="round"/><path d="M1.5 9.5 L5 6 L11.5 12.5 L8 16 Z" fill="#c77fd4" stroke="#b146c2" stroke-width="1.2" stroke-linejoin="round"/></svg>
<svg style="position:absolute;left:1124.5px;top:121.3px;" width="8" height="5" viewBox="0 0 8 5"><path d="M1 1 L4.0 4 L7 1" fill="none" stroke="#3b3a39" stroke-width="1.1"/></svg>
<svg style="position:absolute;left:1148px;top:72px;" width="33" height="28" viewBox="0 0 33 28"><text x="1.5" y="12.5" font-size="14" font-family="Liberation Sans" fill="#1e88d6">A</text><text x="2" y="26.5" font-size="14" font-family="Liberation Sans" fill="#3b3a39">Z</text><path d="M14.5 7 H29.5 V8.5 L24 15 V22.5 H20 V15 L14.5 8.5 Z" fill="#fafafa" stroke="#3b3a39" stroke-width="1.1" stroke-linejoin="round"/></svg>
<div class="t" style="left:1144.00px;top:106.64px;font-size:12px;color:#3b3a39;transform:scaleX(0.8968);">Sắp xếp</div>
<div class="t" style="left:1142.20px;top:122.04px;font-size:12px;color:#3b3a39;transform:scaleX(1.0265);">&amp; Lọc</div>
<svg style="position:absolute;left:1176.8px;top:126.19999999999999px;" width="8" height="5" viewBox="0 0 8 5"><path d="M1 1 L4.0 4 L7 1" fill="none" stroke="#3b3a39" stroke-width="1.1"/></svg>
<svg style="position:absolute;left:1202px;top:70px;" width="33" height="32" viewBox="0 0 33 32"><circle cx="19.4" cy="12.2" r="10.2" fill="#fafafa" stroke="#3b3a39" stroke-width="1.1"/><path d="M12 19.8 L1.5 30.5" stroke="#3b3a39" stroke-width="1.2"/></svg>
<div class="t" style="left:1190.80px;top:106.64px;font-size:12px;color:#3b3a39;transform:scaleX(0.9697);">Tìm &amp; Lựa</div>
<div class="t" style="left:1199.50px;top:122.04px;font-size:12px;color:#3b3a39;">chọn</div>
<svg style="position:absolute;left:1229.2px;top:126.19999999999999px;" width="8" height="5" viewBox="0 0 8 5"><path d="M1 1 L4.0 4 L7 1" fill="none" stroke="#3b3a39" stroke-width="1.1"/></svg>
<div class="t" style="left:1149.00px;top:146.47px;font-size:11.5px;color:#3b3a39;transform:scaleX(0.9832);">Chỉnh sửa</div>
<div style="position:absolute;left:1256px;top:68px;width:1px;height:89px;background:#c8c6c4;"></div>
<svg style="position:absolute;left:1282px;top:70px;" width="30" height="31" viewBox="0 0 30 31"><rect x="1.5" y="2" width="20.5" height="27.5" fill="#ececec" stroke="#c8c6c4" stroke-width="1.1"/><path d="M5.5 17 L15.5 7 L20.5 12 L10.5 22 Z" fill="#ececec" stroke="#bdbbb9" stroke-width="1.1"/><path d="M8 17 L15.5 9.5 M10 19 L17.5 11.5" stroke="#bdbbb9" stroke-width="1"/><path d="M13.5 5.5 L17.5 1.5 L25.5 9.5 L21.5 13.5 Z" fill="#e0e0e0" stroke="#bdbbb9" stroke-width="1.1"/><path d="M20 1.5 L23 -1 L28 4 L25 6.5" fill="#ececec" stroke="#bdbbb9" stroke-width="1"/></svg>
<div class="t" style="left:1267.30px;top:106.94px;font-size:12px;color:#a19f9d;transform:scaleX(0.9927);">Mức nhạy</div>
<div class="t" style="left:1277.50px;top:122.14px;font-size:12px;color:#a19f9d;transform:scaleX(0.9924);">cảm</div>
<svg style="position:absolute;left:1302.8px;top:126.30000000000001px;" width="8" height="5" viewBox="0 0 8 5"><path d="M1 1 L4.0 4 L7 1" fill="none" stroke="#a19f9d" stroke-width="1.1"/></svg>
<div class="t" style="left:1269.00px;top:146.47px;font-size:11.5px;color:#3b3a39;transform:scaleX(0.9424);">Nhạy cảm</div>
<div style="position:absolute;left:1330px;top:68px;width:1px;height:89px;background:#c8c6c4;"></div>
<svg style="position:absolute;left:1347px;top:150px;" width="11" height="7" viewBox="0 0 11 7"><path d="M1 6 L5.5 1.5 L10 6" fill="none" stroke="#3b3a39" stroke-width="1.2"/></svg>
<div style="position:absolute;left:208px;top:239px;width:1px;height:439px;background:#000;"></div>
<div style="position:absolute;left:461px;top:239px;width:1px;height:439px;background:#000;"></div>
<div style="position:absolute;left:647px;top:239px;width:1px;height:439px;background:#000;"></div>
<div style="position:absolute;left:814px;top:239px;width:1px;height:439px;background:#000;"></div>
<div style="position:absolute;left:23px;top:239px;width:907px;height:1px;background:#000;"></div>
<div style="position:absolute;left:23px;top:256px;width:907px;height:1px;background:#000;"></div>
<div style="position:absolute;left:23px;top:273px;width:907px;height:1px;background:#000;"></div>
<div style="position:absolute;left:23px;top:290px;width:907px;height:1px;background:#000;"></div>
<div style="position:absolute;left:23px;top:307px;width:907px;height:1px;background:#000;"></div>
<div style="position:absolute;left:23px;top:324px;width:907px;height:1px;background:#000;"></div>
<div style="position:absolute;left:23px;top:341px;width:907px;height:1px;background:#000;"></div>
<div style="position:absolute;left:23px;top:358px;width:907px;height:1px;background:#000;"></div>
<div style="position:absolute;left:23px;top:375px;width:907px;height:1px;background:#000;"></div>
<div style="position:absolute;left:23px;top:392px;width:907px;height:1px;background:#000;"></div>
<div style="position:absolute;left:23px;top:409px;width:907px;height:1px;background:#000;"></div>
<div style="position:absolute;left:23px;top:426px;width:907px;height:1px;background:#000;"></div>
<div style="position:absolute;left:23px;top:443px;width:907px;height:1px;background:#000;"></div>
<div style="position:absolute;left:23px;top:460px;width:907px;height:1px;background:#000;"></div>
<div style="position:absolute;left:23px;top:477px;width:907px;height:1px;background:#000;"></div>
<div style="position:absolute;left:23px;top:494px;width:907px;height:1px;background:#000;"></div>
<div style="position:absolute;left:23px;top:511px;width:907px;height:1px;background:#000;"></div>
<div style="position:absolute;left:23px;top:528px;width:907px;height:1px;background:#000;"></div>
<div style="position:absolute;left:23px;top:545px;width:907px;height:1px;background:#000;"></div>
<div style="position:absolute;left:23px;top:562px;width:907px;height:1px;background:#000;"></div>
<div style="position:absolute;left:23px;top:579px;width:907px;height:1px;background:#000;"></div>
<div style="position:absolute;left:23px;top:596px;width:907px;height:1px;background:#000;"></div>
<div style="position:absolute;left:23px;top:613px;width:907px;height:1px;background:#000;"></div>
<div style="position:absolute;left:23px;top:630px;width:907px;height:1px;background:#000;"></div>
<div style="position:absolute;left:23px;top:647px;width:907px;height:1px;background:#000;"></div>
<div style="position:absolute;left:23px;top:664px;width:907px;height:1px;background:#000;"></div>
<div style="position:absolute;left:932px;top:239px;width:412px;height:1px;background:#d4d4d4;"></div>
<div style="position:absolute;left:932px;top:256px;width:412px;height:1px;background:#d4d4d4;"></div>
<div style="position:absolute;left:932px;top:273px;width:412px;height:1px;background:#d4d4d4;"></div>
<div style="position:absolute;left:932px;top:290px;width:412px;height:1px;background:#d4d4d4;"></div>
<div style="position:absolute;left:932px;top:307px;width:412px;height:1px;background:#d4d4d4;"></div>
<div style="position:absolute;left:932px;top:324px;width:412px;height:1px;background:#d4d4d4;"></div>
<div style="position:absolute;left:932px;top:341px;width:412px;height:1px;background:#d4d4d4;"></div>
<div style="position:absolute;left:932px;top:358px;width:412px;height:1px;background:#d4d4d4;"></div>
<div style="position:absolute;left:932px;top:375px;width:412px;height:1px;background:#d4d4d4;"></div>
<div style="position:absolute;left:932px;top:392px;width:412px;height:1px;background:#d4d4d4;"></div>
<div style="position:absolute;left:932px;top:409px;width:412px;height:1px;background:#d4d4d4;"></div>
<div style="position:absolute;left:932px;top:426px;width:412px;height:1px;background:#d4d4d4;"></div>
<div style="position:absolute;left:932px;top:443px;width:412px;height:1px;background:#d4d4d4;"></div>
<div style="position:absolute;left:932px;top:460px;width:412px;height:1px;background:#d4d4d4;"></div>
<div style="position:absolute;left:932px;top:477px;width:412px;height:1px;background:#d4d4d4;"></div>
<div style="position:absolute;left:932px;top:494px;width:412px;height:1px;background:#d4d4d4;"></div>
<div style="position:absolute;left:932px;top:511px;width:412px;height:1px;background:#d4d4d4;"></div>
<div style="position:absolute;left:932px;top:528px;width:412px;height:1px;background:#d4d4d4;"></div>
<div style="position:absolute;left:932px;top:545px;width:412px;height:1px;background:#d4d4d4;"></div>
<div style="position:absolute;left:932px;top:562px;width:412px;height:1px;background:#d4d4d4;"></div>
<div style="position:absolute;left:932px;top:579px;width:412px;height:1px;background:#d4d4d4;"></div>
<div style="position:absolute;left:932px;top:596px;width:412px;height:1px;background:#d4d4d4;"></div>
<div style="position:absolute;left:932px;top:613px;width:412px;height:1px;background:#d4d4d4;"></div>
<div style="position:absolute;left:932px;top:630px;width:412px;height:1px;background:#d4d4d4;"></div>
<div style="position:absolute;left:932px;top:647px;width:412px;height:1px;background:#d4d4d4;"></div>
<div style="position:absolute;left:932px;top:664px;width:412px;height:1px;background:#d4d4d4;"></div>
<div style="position:absolute;left:999px;top:223px;width:1px;height:455px;background:#d4d4d4;"></div>
<div style="position:absolute;left:1053px;top:223px;width:1px;height:455px;background:#d4d4d4;"></div>
<div style="position:absolute;left:1107px;top:223px;width:1px;height:455px;background:#d4d4d4;"></div>
<div style="position:absolute;left:1161px;top:223px;width:1px;height:455px;background:#d4d4d4;"></div>
<div style="position:absolute;left:1215px;top:223px;width:1px;height:455px;background:#d4d4d4;"></div>
<div style="position:absolute;left:1269px;top:223px;width:1px;height:455px;background:#d4d4d4;"></div>
<div style="position:absolute;left:1323px;top:223px;width:1px;height:455px;background:#d4d4d4;"></div>
<div style="position:absolute;left:23px;top:223px;width:907px;height:16px;background:#31869b;"></div>
<div style="position:absolute;left:930px;top:222px;width:2px;height:456px;background:#217346;"></div>
<div style="position:absolute;left:22px;top:207px;width:1px;height:15px;background:#b0b0b0;"></div>
<div style="position:absolute;left:206px;top:207px;width:1px;height:15px;background:#b7b7b7;"></div>
<div style="position:absolute;left:210px;top:207px;width:1px;height:15px;background:#b7b7b7;"></div>
<div style="position:absolute;left:459px;top:207px;width:1px;height:15px;background:#b7b7b7;"></div>
<div style="position:absolute;left:463px;top:207px;width:1px;height:15px;background:#b7b7b7;"></div>
<div style="position:absolute;left:645px;top:207px;width:1px;height:15px;background:#b7b7b7;"></div>
<div style="position:absolute;left:649px;top:207px;width:1px;height:15px;background:#b7b7b7;"></div>
<div style="position:absolute;left:812px;top:207px;width:1px;height:15px;background:#b7b7b7;"></div>
<div style="position:absolute;left:816px;top:207px;width:1px;height:15px;background:#b7b7b7;"></div>
<div style="position:absolute;left:928px;top:207px;width:1px;height:15px;background:#b7b7b7;"></div>
<div style="position:absolute;left:932px;top:207px;width:1px;height:15px;background:#b7b7b7;"></div>
<div style="position:absolute;left:999px;top:207px;width:1px;height:15px;background:#c8c8c8;"></div>
<div style="position:absolute;left:1053px;top:207px;width:1px;height:15px;background:#c8c8c8;"></div>
<div style="position:absolute;left:1107px;top:207px;width:1px;height:15px;background:#c8c8c8;"></div>
<div style="position:absolute;left:1161px;top:207px;width:1px;height:15px;background:#c8c8c8;"></div>
<div style="position:absolute;left:1215px;top:207px;width:1px;height:15px;background:#c8c8c8;"></div>
<div style="position:absolute;left:1269px;top:207px;width:1px;height:15px;background:#c8c8c8;"></div>
<div style="position:absolute;left:1323px;top:207px;width:1px;height:15px;background:#c8c8c8;"></div>
<svg style="position:absolute;left:11px;top:211px;" width="8" height="8" viewBox="0 0 8 8"><polygon points="8,0 8,8 0,8" fill="#b4b4b4"/></svg>
<div class="t" style="left:111.70px;top:209.27px;font-size:11.5px;color:#222;transform:scaleX(0.8935);">G</div>
<div class="t" style="left:334.20px;top:209.27px;font-size:11.5px;color:#222;transform:scaleX(0.9366);">I</div>
<div class="t" style="left:552.20px;top:209.27px;font-size:11.5px;color:#222;transform:scaleX(0.7821);">K</div>
<div class="t" style="left:727.70px;top:209.27px;font-size:11.5px;color:#222;transform:scaleX(0.9624);">N</div>
<div class="t" style="left:869.20px;top:209.27px;font-size:11.5px;color:#222;transform:scaleX(0.8935);">Q</div>
<div class="t" style="left:963.20px;top:209.27px;font-size:11.5px;color:#222;transform:scaleX(0.9124);">V</div>
<div class="t" style="left:1021.70px;top:209.27px;font-size:11.5px;color:#222;transform:scaleX(1.0129);">W</div>
<div class="t" style="left:1078.20px;top:209.27px;font-size:11.5px;color:#222;transform:scaleX(0.7821);">X</div>
<div class="t" style="left:1132.20px;top:209.27px;font-size:11.5px;color:#222;transform:scaleX(0.7821);">Y</div>
<div class="t" style="left:1186.20px;top:209.27px;font-size:11.5px;color:#222;transform:scaleX(0.8533);">Z</div>
<div class="t" style="left:1236.20px;top:209.27px;font-size:11.5px;color:#222;transform:scaleX(0.9124);">AA</div>
<div class="t" style="left:1290.20px;top:209.27px;font-size:11.5px;color:#222;transform:scaleX(0.9124);">AB</div>
<div class="t" style="left:8.10px;top:227.07px;font-size:11.5px;color:#1e6b43;">1</div>
<div class="t" style="left:8.10px;top:244.07px;font-size:11.5px;color:#1e6b43;">2</div>
<div class="t" style="left:8.10px;top:261.07px;font-size:11.5px;color:#1e6b43;">3</div>
<div class="t" style="left:8.10px;top:278.07px;font-size:11.5px;color:#1e6b43;">4</div>
<div class="t" style="left:8.10px;top:295.07px;font-size:11.5px;color:#1e6b43;">5</div>
<div class="t" style="left:8.10px;top:312.07px;font-size:11.5px;color:#1e6b43;">6</div>
<div class="t" style="left:8.10px;top:329.07px;font-size:11.5px;color:#1e6b43;">7</div>
<div class="t" style="left:8.10px;top:346.07px;font-size:11.5px;color:#1e6b43;">8</div>
<div class="t" style="left:8.10px;top:363.07px;font-size:11.5px;color:#1e6b43;">9</div>
<div class="t" style="left:4.90px;top:380.07px;font-size:11.5px;color:#1e6b43;">10</div>
<div class="t" style="left:5.32px;top:397.07px;font-size:11.5px;color:#1e6b43;">11</div>
<div class="t" style="left:4.90px;top:414.07px;font-size:11.5px;color:#1e6b43;">12</div>
<div class="t" style="left:4.90px;top:431.07px;font-size:11.5px;color:#1e6b43;">13</div>
<div class="t" style="left:4.90px;top:448.07px;font-size:11.5px;color:#1e6b43;">14</div>
<div class="t" style="left:4.90px;top:465.07px;font-size:11.5px;color:#1e6b43;">15</div>
<div class="t" style="left:4.90px;top:482.07px;font-size:11.5px;color:#1e6b43;">16</div>
<div class="t" style="left:4.90px;top:499.07px;font-size:11.5px;color:#1e6b43;">17</div>
<div class="t" style="left:4.90px;top:516.07px;font-size:11.5px;color:#1e6b43;">18</div>
<div class="t" style="left:4.90px;top:533.07px;font-size:11.5px;color:#1e6b43;">19</div>
<div class="t" style="left:4.90px;top:550.07px;font-size:11.5px;color:#1e6b43;">20</div>
<div class="t" style="left:4.90px;top:567.07px;font-size:11.5px;color:#1e6b43;">21</div>
<div class="t" style="left:4.90px;top:584.07px;font-size:11.5px;color:#1e6b43;">22</div>
<div class="t" style="left:4.90px;top:601.07px;font-size:11.5px;color:#1e6b43;">23</div>
<div class="t" style="left:4.90px;top:618.07px;font-size:11.5px;color:#1e6b43;">24</div>
<div class="t" style="left:4.90px;top:635.07px;font-size:11.5px;color:#1e6b43;">25</div>
<div class="t" style="left:4.90px;top:652.07px;font-size:11.5px;color:#1e6b43;">26</div>
<div class="t" style="left:4.90px;top:669.07px;font-size:11.5px;color:#1e6b43;">27</div>
<div style="position:absolute;left:191px;top:223px;width:17px;height:16px;box-sizing:border-box;border:1px solid #b9b9b9;background:linear-gradient(#ffffff,#eef0f3);"></div>
<svg style="position:absolute;left:195px;top:229px;" width="9" height="5" viewBox="0 0 9 5"><polygon points="0,0 9,0 4.5,5" fill="#606060"/></svg>
<div style="position:absolute;left:444px;top:223px;width:17px;height:16px;box-sizing:border-box;border:1px solid #b9b9b9;background:linear-gradient(#ffffff,#eef0f3);"></div>
<svg style="position:absolute;left:448px;top:229px;" width="9" height="5" viewBox="0 0 9 5"><polygon points="0,0 9,0 4.5,5" fill="#606060"/></svg>
<div style="position:absolute;left:630px;top:223px;width:17px;height:16px;box-sizing:border-box;border:1px solid #b9b9b9;background:linear-gradient(#ffffff,#eef0f3);"></div>
<svg style="position:absolute;left:634px;top:229px;" width="9" height="5" viewBox="0 0 9 5"><polygon points="0,0 9,0 4.5,5" fill="#606060"/></svg>
<div style="position:absolute;left:797px;top:223px;width:17px;height:16px;box-sizing:border-box;border:1px solid #b9b9b9;background:linear-gradient(#ffffff,#eef0f3);"></div>
<svg style="position:absolute;left:801px;top:229px;" width="9" height="5" viewBox="0 0 9 5"><polygon points="0,0 9,0 4.5,5" fill="#606060"/></svg>
<div style="position:absolute;left:913px;top:223px;width:17px;height:16px;box-sizing:border-box;border:1px solid #b9b9b9;background:linear-gradient(#ffffff,#eef0f3);"></div>
<svg style="position:absolute;left:917px;top:229px;" width="9" height="5" viewBox="0 0 9 5"><polygon points="0,0 9,0 4.5,5" fill="#606060"/></svg>
<div style="position:absolute;left:982px;top:223px;width:17px;height:16px;box-sizing:border-box;border:1px solid #b9b9b9;background:linear-gradient(#ffffff,#eef0f3);"></div>
<svg style="position:absolute;left:986px;top:229px;" width="9" height="5" viewBox="0 0 9 5"><polygon points="0,0 9,0 4.5,5" fill="#606060"/></svg>
<div class="t" style="left:25.00px;top:227.07px;font-size:11.5px;color:#fff;font-weight:700;transform:scaleX(0.9028);">TÊN NPP</div>
<div class="t" style="left:212.00px;top:227.07px;font-size:11.5px;color:#fff;font-weight:700;transform:scaleX(0.9407);">Địa chỉ e-mail NPP</div>
<div class="t" style="left:465.00px;top:227.07px;font-size:11.5px;color:#fff;font-weight:700;transform:scaleX(0.8941);">Email GSBH</div>
<div class="t" style="left:651.00px;top:227.07px;font-size:11.5px;color:#fff;font-weight:700;transform:scaleX(0.9780);">ASM</div>
<div class="t" style="left:818.00px;top:227.07px;font-size:11.5px;color:#fff;font-weight:700;transform:scaleX(0.9389);">RSM</div>
<div style="position:absolute;left:23px;top:240px;width:185px;height:16px;overflow:hidden"><div class="t" style="left:2.00px;top:4.07px;font-size:11.5px;color:#000;transform:scaleX(0.9327);">CÔNG TY TNHH MỘT THÀNH VIÊN THƯƠNG MẠI</div></div>
<div class="t" style="left:212.00px;top:244.07px;font-size:11.5px;color:#000;transform:scaleX(1.0726);">bachtunghn@thmilkdistributors.vn</div>
<div class="t" style="left:465.00px;top:244.07px;font-size:11.5px;color:#000;transform:scaleX(1.0714);">lvnhat@thmilk.vn</div>
<div class="t" style="left:651.00px;top:244.07px;font-size:11.5px;color:#000;transform:scaleX(1.0714);">vthieu@thmilk.vn</div>
<div class="t" style="left:818.00px;top:244.07px;font-size:11.5px;color:#000;transform:scaleX(1.0794);">ttdung1@thmilk.vn</div>
<div style="position:absolute;left:23px;top:257px;width:185px;height:16px;overflow:hidden"><div class="t" style="left:2.00px;top:4.07px;font-size:11.5px;color:#000;transform:scaleX(0.9182);">CÔNG TY TNHH ĐẦU TƯ PHÁT TRIỂN THƯƠNG MẠI</div></div>
<div class="t" style="left:212.00px;top:261.07px;font-size:11.5px;color:#000;transform:scaleX(1.0737);">namanhhn@thmilkdistributors.vn</div>
<div class="t" style="left:465.00px;top:261.07px;font-size:11.5px;color:#000;transform:scaleX(1.0920);">tdthinh@thmilk.vn</div>
<div class="t" style="left:651.00px;top:261.07px;font-size:11.5px;color:#000;transform:scaleX(1.0714);">vthieu@thmilk.vn</div>
<div class="t" style="left:818.00px;top:261.07px;font-size:11.5px;color:#000;transform:scaleX(1.0794);">ttdung1@thmilk.vn</div>
<div style="position:absolute;left:23px;top:274px;width:185px;height:16px;overflow:hidden"><div class="t" style="left:2.00px;top:4.07px;font-size:11.5px;color:#000;transform:scaleX(0.9201);">CÔNG TY TNHH THƯƠNG MẠI XUẤT NHẬP KHẨU</div></div>
<div class="t" style="left:212.00px;top:278.07px;font-size:11.5px;color:#000;transform:scaleX(1.0776);">phonganhhn@thmilkdistributors.vn</div>
<div class="t" style="left:465.00px;top:278.07px;font-size:11.5px;color:#000;transform:scaleX(1.0706);">tuong.bd@thmilk.vn</div>
<div class="t" style="left:651.00px;top:278.07px;font-size:11.5px;color:#000;transform:scaleX(1.0714);">vthieu@thmilk.vn</div>
<div class="t" style="left:818.00px;top:278.07px;font-size:11.5px;color:#000;transform:scaleX(1.0794);">ttdung1@thmilk.vn</div>
<div style="position:absolute;left:23px;top:291px;width:185px;height:16px;overflow:hidden"><div class="t" style="left:2.00px;top:4.07px;font-size:11.5px;color:#000;transform:scaleX(0.9294);">CÔNG TY TNHH THƯƠNG MẠI DỊCH VỤ</div></div>
<div class="t" style="left:212.00px;top:295.07px;font-size:11.5px;color:#000;transform:scaleX(1.0751);">dongsonhn@thmilkdistributors.vn</div>
<div class="t" style="left:465.00px;top:295.07px;font-size:11.5px;color:#000;transform:scaleX(1.0552);">nam.nv@thmilk.vn</div>
<div class="t" style="left:651.00px;top:295.07px;font-size:11.5px;color:#000;transform:scaleX(1.0635);">ltbang@thmilk.vn</div>
<div class="t" style="left:818.00px;top:295.07px;font-size:11.5px;color:#000;transform:scaleX(1.0794);">ttdung1@thmilk.vn</div>
<div style="position:absolute;left:23px;top:308px;width:185px;height:16px;overflow:hidden"><div class="t" style="left:2.00px;top:4.07px;font-size:11.5px;color:#000;transform:scaleX(0.9284);">CÔNG TY TNHH THƯƠNG MẠI VÀ DỊCH VỤ</div></div>
<div class="t" style="left:212.00px;top:312.07px;font-size:11.5px;color:#000;transform:scaleX(1.0812);">tamhopphathn@thmilkdistributors.vn</div>
<div class="t" style="left:465.00px;top:312.07px;font-size:11.5px;color:#000;transform:scaleX(1.0656);">hiep.nh@thmilk.vn</div>
<div class="t" style="left:651.00px;top:312.07px;font-size:11.5px;color:#000;transform:scaleX(1.0635);">ltbang@thmilk.vn</div>
<div class="t" style="left:818.00px;top:312.07px;font-size:11.5px;color:#000;transform:scaleX(1.0794);">ttdung1@thmilk.vn</div>
<div style="position:absolute;left:23px;top:325px;width:185px;height:16px;overflow:hidden"><div class="t" style="left:2.00px;top:4.07px;font-size:11.5px;color:#000;transform:scaleX(0.9028);">CÔNG TY CỔ PHẦN LƯƠNG HẰNG</div></div>
<div class="t" style="left:212.00px;top:329.07px;font-size:11.5px;color:#000;transform:scaleX(1.0733);">luonghanghn@thmilkdistributors.vn</div>
<div class="t" style="left:465.00px;top:329.07px;font-size:11.5px;color:#000;transform:scaleX(1.0645);">hainv@thmilk.vn</div>
<div class="t" style="left:651.00px;top:329.07px;font-size:11.5px;color:#000;transform:scaleX(1.0635);">ltbang@thmilk.vn</div>
<div class="t" style="left:818.00px;top:329.07px;font-size:11.5px;color:#000;transform:scaleX(1.0794);">ttdung1@thmilk.vn</div>
<div style="position:absolute;left:23px;top:342px;width:185px;height:16px;overflow:hidden"><div class="t" style="left:2.00px;top:4.07px;font-size:11.5px;color:#000;transform:scaleX(0.9284);">CÔNG TY TNHH THƯƠNG MẠI VÀ DỊCH VỤ</div></div>
<div class="t" style="left:212.00px;top:346.07px;font-size:11.5px;color:#000;transform:scaleX(1.0720);">hatruonggianghn@thmilkdistributors.vn</div>
<div class="t" style="left:465.00px;top:346.07px;font-size:11.5px;color:#000;transform:scaleX(1.0689);">tuan.nn@thmilk.vn</div>
<div class="t" style="left:651.00px;top:346.07px;font-size:11.5px;color:#000;transform:scaleX(1.0635);">ltbang@thmilk.vn</div>
<div class="t" style="left:818.00px;top:346.07px;font-size:11.5px;color:#000;transform:scaleX(1.0794);">ttdung1@thmilk.vn</div>
<div style="position:absolute;left:23px;top:359px;width:185px;height:16px;overflow:hidden"><div class="t" style="left:2.00px;top:4.07px;font-size:11.5px;color:#000;transform:scaleX(0.9216);">CÔNG TY CỔ PHẦN THƯƠNG MẠI THỰC PHẨM</div></div>
<div class="t" style="left:212.00px;top:363.07px;font-size:11.5px;color:#000;transform:scaleX(1.0727);">lcarehn@thmilkdistributors.vn</div>
<div class="t" style="left:465.00px;top:363.07px;font-size:11.5px;color:#000;transform:scaleX(1.0684);">dtlam@thmilk.vn</div>
<div class="t" style="left:651.00px;top:363.07px;font-size:11.5px;color:#000;transform:scaleX(1.0856);">ntnoi@thmilk.vn</div>
<div class="t" style="left:818.00px;top:363.07px;font-size:11.5px;color:#000;transform:scaleX(1.0794);">ttdung1@thmilk.vn</div>
<div style="position:absolute;left:23px;top:376px;width:185px;height:16px;overflow:hidden"><div class="t" style="left:2.00px;top:4.07px;font-size:11.5px;color:#000;transform:scaleX(0.9030);">CÔNG TY CỔ PHẦN CHUYÊN BÁN BUÔN</div></div>
<div class="t" style="left:212.00px;top:380.07px;font-size:11.5px;color:#000;transform:scaleX(1.0764);">batoshn@thmilkdistributors.vn</div>
<div class="t" style="left:465.00px;top:380.07px;font-size:11.5px;color:#000;transform:scaleX(1.0748);">thanhnd@thmilk.vn</div>
<div class="t" style="left:651.00px;top:380.07px;font-size:11.5px;color:#000;transform:scaleX(1.0856);">ntnoi@thmilk.vn</div>
<div class="t" style="left:818.00px;top:380.07px;font-size:11.5px;color:#000;transform:scaleX(1.0794);">ttdung1@thmilk.vn</div>
<div style="position:absolute;left:23px;top:393px;width:185px;height:16px;overflow:hidden"><div class="t" style="left:2.00px;top:4.07px;font-size:11.5px;color:#000;transform:scaleX(0.9294);">CÔNG TY TNHH DỊCH VỤ THƯƠNG MẠI</div></div>
<div class="t" style="left:212.00px;top:397.07px;font-size:11.5px;color:#000;transform:scaleX(1.0837);">tienphathn@thmilkdistributors.vn</div>
<div class="t" style="left:465.00px;top:397.07px;font-size:11.5px;color:#000;transform:scaleX(1.0656);">nhat.nv@thmilk.vn</div>
<div class="t" style="left:651.00px;top:397.07px;font-size:11.5px;color:#000;transform:scaleX(1.0856);">ntnoi@thmilk.vn</div>
<div class="t" style="left:818.00px;top:397.07px;font-size:11.5px;color:#000;transform:scaleX(1.0794);">ttdung1@thmilk.vn</div>
<div style="position:absolute;left:23px;top:410px;width:185px;height:16px;overflow:hidden"><div class="t" style="left:2.00px;top:4.07px;font-size:11.5px;color:#000;transform:scaleX(0.9199);">CÔNG TY CỔ PHẦN THƯƠNG MẠI VÀ DỊCH VỤ</div></div>
<div class="t" style="left:212.00px;top:414.07px;font-size:11.5px;color:#000;transform:scaleX(1.0759);">khaianhhn@thmilkdistributors.vn</div>
<div class="t" style="left:465.00px;top:414.07px;font-size:11.5px;color:#000;transform:scaleX(1.0783);">tungdt@thmilk.vn</div>
<div class="t" style="left:651.00px;top:414.07px;font-size:11.5px;color:#000;transform:scaleX(1.0856);">ntnoi@thmilk.vn</div>
<div class="t" style="left:818.00px;top:414.07px;font-size:11.5px;color:#000;transform:scaleX(1.0794);">ttdung1@thmilk.vn</div>
<div style="position:absolute;left:23px;top:427px;width:185px;height:16px;overflow:hidden"><div class="t" style="left:2.00px;top:4.07px;font-size:11.5px;color:#000;transform:scaleX(0.9482);">CÔNG TY TNHH TM&amp;DV DUNG ANH</div></div>
<div class="t" style="left:212.00px;top:431.07px;font-size:11.5px;color:#000;transform:scaleX(1.0769);">dunganhhn@thmilkdistributors.vn</div>
<div class="t" style="left:465.00px;top:431.07px;font-size:11.5px;color:#000;transform:scaleX(1.0699);">nnlong@thmilk.vn</div>
<div class="t" style="left:651.00px;top:431.07px;font-size:11.5px;color:#000;transform:scaleX(1.0735);">nt.tung@thmilk.vn</div>
<div class="t" style="left:818.00px;top:431.07px;font-size:11.5px;color:#000;transform:scaleX(1.0794);">ttdung1@thmilk.vn</div>
<div style="position:absolute;left:23px;top:444px;width:185px;height:16px;overflow:hidden"><div class="t" style="left:2.00px;top:4.07px;font-size:11.5px;color:#000;transform:scaleX(0.9112);">CÔNG TY TNHH THANH HUYỀN TRANG</div></div>
<div class="t" style="left:212.00px;top:448.07px;font-size:11.5px;color:#000;transform:scaleX(1.0781);">thanhhuyentranghn@thmilkdistributors.vn</div>
<div class="t" style="left:465.00px;top:448.07px;font-size:11.5px;color:#000;transform:scaleX(1.0748);">pthuong@thmilk.vn</div>
<div class="t" style="left:651.00px;top:448.07px;font-size:11.5px;color:#000;transform:scaleX(1.0735);">nt.tung@thmilk.vn</div>
<div class="t" style="left:818.00px;top:448.07px;font-size:11.5px;color:#000;transform:scaleX(1.0794);">ttdung1@thmilk.vn</div>
<div style="position:absolute;left:23px;top:461px;width:185px;height:16px;overflow:hidden"><div class="t" style="left:2.00px;top:4.07px;font-size:11.5px;color:#000;transform:scaleX(0.9284);">CÔNG TY TNHH THƯƠNG MẠI VÀ DỊCH VỤ</div></div>
<div class="t" style="left:212.00px;top:465.07px;font-size:11.5px;color:#000;transform:scaleX(1.0816);">thangthuyhn@thmilkdistributors.vn</div>
<div class="t" style="left:465.00px;top:465.07px;font-size:11.5px;color:#000;transform:scaleX(1.0712);">lhhien@thmilk.vn</div>
<div class="t" style="left:651.00px;top:465.07px;font-size:11.5px;color:#000;transform:scaleX(1.0735);">nt.tung@thmilk.vn</div>
<div class="t" style="left:818.00px;top:465.07px;font-size:11.5px;color:#000;transform:scaleX(1.0794);">ttdung1@thmilk.vn</div>
<div style="position:absolute;left:23px;top:478px;width:185px;height:16px;overflow:hidden"><div class="t" style="left:2.00px;top:4.07px;font-size:11.5px;color:#000;transform:scaleX(0.9209);">CÔNG TY TNHH NHÃN HIỆU VÀNG PHÚ HƯNG</div></div>
<div class="t" style="left:212.00px;top:482.07px;font-size:11.5px;color:#000;transform:scaleX(1.0828);">phuhunghn@thmilkdistributors.vn</div>
<div class="t" style="left:465.00px;top:482.07px;font-size:11.5px;color:#000;transform:scaleX(1.0656);">son.nt2@thmilk.vn</div>
<div class="t" style="left:651.00px;top:482.07px;font-size:11.5px;color:#000;transform:scaleX(1.0735);">nt.tung@thmilk.vn</div>
<div class="t" style="left:818.00px;top:482.07px;font-size:11.5px;color:#000;transform:scaleX(1.0794);">ttdung1@thmilk.vn</div>
<div style="position:absolute;left:23px;top:495px;width:185px;height:16px;overflow:hidden"><div class="t" style="left:2.00px;top:4.07px;font-size:11.5px;color:#000;transform:scaleX(0.9132);">CÔNG TY TNHH PHÂN PHỐI HÀNG HÓA</div></div>
<div class="t" style="left:212.00px;top:499.07px;font-size:11.5px;color:#000;transform:scaleX(1.0811);">minhanhhp@thmilkdistributors.vn</div>
<div class="t" style="left:465.00px;top:499.07px;font-size:11.5px;color:#000;transform:scaleX(1.0689);">ththang@thmilk.vn</div>
<div class="t" style="left:651.00px;top:499.07px;font-size:11.5px;color:#000;transform:scaleX(1.0636);">hmhai@thmilk.vn</div>
<div class="t" style="left:818.00px;top:499.07px;font-size:11.5px;color:#000;transform:scaleX(1.0608);">tuan.ngo@thmilk.vn</div>
<div style="position:absolute;left:23px;top:512px;width:185px;height:16px;overflow:hidden"><div class="t" style="left:2.00px;top:4.07px;font-size:11.5px;color:#000;transform:scaleX(0.9282);">CÔNG TY TNHH THƯƠNG MẠI TÙNG THÁI</div></div>
<div class="t" style="left:212.00px;top:516.07px;font-size:11.5px;color:#000;transform:scaleX(1.0837);">tungthaihp@thmilkdistributors.vn</div>
<div class="t" style="left:465.00px;top:516.07px;font-size:11.5px;color:#000;transform:scaleX(1.0651);">tatan@thmilk.vn</div>
<div class="t" style="left:651.00px;top:516.07px;font-size:11.5px;color:#000;transform:scaleX(1.0636);">hmhai@thmilk.vn</div>
<div class="t" style="left:818.00px;top:516.07px;font-size:11.5px;color:#000;transform:scaleX(1.0608);">tuan.ngo@thmilk.vn</div>
<div style="position:absolute;left:23px;top:529px;width:185px;height:16px;overflow:hidden"><div class="t" style="left:2.00px;top:4.07px;font-size:11.5px;color:#000;transform:scaleX(0.9257);">CÔNG TY TRÁCH NHIỆM HỮU HẠN HÙNG THÁI</div></div>
<div class="t" style="left:212.00px;top:533.07px;font-size:11.5px;color:#000;transform:scaleX(1.0810);">hungthaihp@thmilkdistributors.vn</div>
<div class="t" style="left:465.00px;top:533.07px;font-size:11.5px;color:#000;transform:scaleX(1.0682);">bvtau@thmilk.vn</div>
<div class="t" style="left:651.00px;top:533.07px;font-size:11.5px;color:#000;transform:scaleX(1.0636);">hmhai@thmilk.vn</div>
<div class="t" style="left:818.00px;top:533.07px;font-size:11.5px;color:#000;transform:scaleX(1.0608);">tuan.ngo@thmilk.vn</div>
<div style="position:absolute;left:23px;top:546px;width:185px;height:16px;overflow:hidden"><div class="t" style="left:2.00px;top:4.07px;font-size:11.5px;color:#000;transform:scaleX(0.9283);">CÔNG TY TNHH HÒA MINH PHÁT ĐẠT</div></div>
<div class="t" style="left:212.00px;top:550.07px;font-size:11.5px;color:#000;transform:scaleX(1.0773);">hoaminhphatdathy@thmilkdistributors.vn</div>
<div class="t" style="left:465.00px;top:550.07px;font-size:11.5px;color:#000;transform:scaleX(1.0594);">tam.hv@thmilk.vn</div>
<div class="t" style="left:651.00px;top:550.07px;font-size:11.5px;color:#000;transform:scaleX(1.0636);">hmhai@thmilk.vn</div>
<div class="t" style="left:818.00px;top:550.07px;font-size:11.5px;color:#000;transform:scaleX(1.0608);">tuan.ngo@thmilk.vn</div>
<div style="position:absolute;left:23px;top:563px;width:185px;height:16px;overflow:hidden"><div class="t" style="left:2.00px;top:4.07px;font-size:11.5px;color:#000;transform:scaleX(0.9291);">CÔNG TNHH THƯƠNG MẠI DỊCH VỤ CHÍ BỀN</div></div>
<div class="t" style="left:212.00px;top:567.07px;font-size:11.5px;color:#000;transform:scaleX(1.0752);">chibenhp@thmilkdistributors.vn</div>
<div class="t" style="left:465.00px;top:567.07px;font-size:11.5px;color:#000;transform:scaleX(1.0570);">hoang.nh@thmilk.vn</div>
<div class="t" style="left:651.00px;top:567.07px;font-size:11.5px;color:#000;transform:scaleX(1.0636);">hmhai@thmilk.vn</div>
<div class="t" style="left:818.00px;top:567.07px;font-size:11.5px;color:#000;transform:scaleX(1.0608);">tuan.ngo@thmilk.vn</div>
<div style="position:absolute;left:23px;top:580px;width:185px;height:16px;overflow:hidden"><div class="t" style="left:2.00px;top:4.07px;font-size:11.5px;color:#000;transform:scaleX(0.9258);">CÔNG TY TNHH MINH QUANG HƯNG YÊN</div></div>
<div class="t" style="left:212.00px;top:584.07px;font-size:11.5px;color:#000;transform:scaleX(1.0749);">minhquanghy@thmilkdistributors.vn</div>
<div class="t" style="left:465.00px;top:584.07px;font-size:11.5px;color:#000;transform:scaleX(1.0682);">dtvan@thmilk.vn</div>
<div class="t" style="left:651.00px;top:584.07px;font-size:11.5px;color:#000;transform:scaleX(1.0636);">hmhai@thmilk.vn</div>
<div class="t" style="left:818.00px;top:584.07px;font-size:11.5px;color:#000;transform:scaleX(1.0608);">tuan.ngo@thmilk.vn</div>
<div style="position:absolute;left:23px;top:597px;width:185px;height:16px;overflow:hidden"><div class="t" style="left:2.00px;top:4.07px;font-size:11.5px;color:#000;transform:scaleX(0.9294);">CÔNG TY TNHH DỊCH VỤ THƯƠNG MẠI</div></div>
<div class="t" style="left:212.00px;top:601.07px;font-size:11.5px;color:#000;transform:scaleX(1.0872);">thanhthuyqn@thmilkdistributors.vn</div>
<div class="t" style="left:465.00px;top:601.07px;font-size:11.5px;color:#000;transform:scaleX(1.0656);">yen.nt1@thmilk.vn</div>
<div class="t" style="left:651.00px;top:601.07px;font-size:11.5px;color:#000;transform:scaleX(1.0826);">tddo@thmilk.vn</div>
<div class="t" style="left:818.00px;top:601.07px;font-size:11.5px;color:#000;transform:scaleX(1.0608);">tuan.ngo@thmilk.vn</div>
<div style="position:absolute;left:23px;top:614px;width:185px;height:16px;overflow:hidden"><div class="t" style="left:2.00px;top:4.07px;font-size:11.5px;color:#000;transform:scaleX(0.9391);">DNTN - HỒNG HẢI</div></div>
<div class="t" style="left:212.00px;top:618.07px;font-size:11.5px;color:#000;transform:scaleX(1.0777);">honghaiqn@thmilkdistributors.vn</div>
<div class="t" style="left:465.00px;top:618.07px;font-size:11.5px;color:#000;transform:scaleX(1.0612);">vuong.lv@thmilk.vn</div>
<div class="t" style="left:651.00px;top:618.07px;font-size:11.5px;color:#000;transform:scaleX(1.0826);">tddo@thmilk.vn</div>
<div class="t" style="left:818.00px;top:618.07px;font-size:11.5px;color:#000;transform:scaleX(1.0608);">tuan.ngo@thmilk.vn</div>
<div style="position:absolute;left:23px;top:631px;width:185px;height:16px;overflow:hidden"><div class="t" style="left:2.00px;top:4.07px;font-size:11.5px;color:#000;transform:scaleX(0.9030);">CÔNG TY CỔ PHẦN LỘC PHÁT QUẢNG NINH</div></div>
<div class="t" style="left:212.00px;top:635.07px;font-size:11.5px;color:#000;transform:scaleX(1.0789);">quangninhqn@thmilkdistributors.vn</div>
<div class="t" style="left:465.00px;top:635.07px;font-size:11.5px;color:#000;transform:scaleX(1.0632);">viet.hv@thmilk.vn</div>
<div class="t" style="left:651.00px;top:635.07px;font-size:11.5px;color:#000;transform:scaleX(1.0826);">tddo@thmilk.vn</div>
<div class="t" style="left:818.00px;top:635.07px;font-size:11.5px;color:#000;transform:scaleX(1.0608);">tuan.ngo@thmilk.vn</div>
<div style="position:absolute;left:23px;top:648px;width:185px;height:16px;overflow:hidden"><div class="t" style="left:2.00px;top:4.07px;font-size:11.5px;color:#000;transform:scaleX(0.9371);">CÔNG TY TNHH TM-DV DŨNG THÀNH</div></div>
<div class="t" style="left:212.00px;top:652.07px;font-size:11.5px;color:#000;transform:scaleX(1.0806);">dungthanhhd@thmilkdistributors.vn</div>
<div class="t" style="left:465.00px;top:652.07px;font-size:11.5px;color:#000;transform:scaleX(1.0643);">vvdoanh@thmilk.vn</div>
<div class="t" style="left:651.00px;top:652.07px;font-size:11.5px;color:#000;transform:scaleX(1.0826);">tddo@thmilk.vn</div>
<div class="t" style="left:818.00px;top:652.07px;font-size:11.5px;color:#000;transform:scaleX(1.0608);">tuan.ngo@thmilk.vn</div>
<div style="position:absolute;left:23px;top:665px;width:185px;height:16px;overflow:hidden"><div class="t" style="left:2.00px;top:4.07px;font-size:11.5px;color:#000;transform:scaleX(0.9327);">CÔNG TY TNHH MỘT THÀNH VIÊN THƯƠNG MẠI</div></div>
<div class="t" style="left:212.00px;top:669.07px;font-size:11.5px;color:#000;transform:scaleX(1.0802);">hongphatqn@thmilkdistributors.vn</div>
<div class="t" style="left:465.00px;top:669.07px;font-size:11.5px;color:#000;transform:scaleX(1.0701);">huu.vd@thmilk.vn</div>
<div class="t" style="left:651.00px;top:669.07px;font-size:11.5px;color:#000;transform:scaleX(1.0826);">tddo@thmilk.vn</div>
<div class="t" style="left:818.00px;top:669.07px;font-size:11.5px;color:#000;transform:scaleX(1.0608);">tuan.ngo@thmilk.vn</div>
<div style="position:absolute;left:0px;top:679px;width:1365px;height:27px;background:#e6e6e6;"></div>
<div style="position:absolute;left:0px;top:679px;width:1365px;height:27px;background:#e6e6e6;"></div>
<div style="position:absolute;left:0px;top:706px;width:1365px;height:1px;background:#cfcfcf;"></div>
<div style="position:absolute;left:0px;top:707px;width:1365px;height:18px;background:#f3f2f1;"></div>
<div style="position:absolute;left:5px;top:171px;width:102px;height:26px;box-sizing:border-box;border:1px solid #c6c6c6;background:#fff;"></div>
<div class="t" style="left:11.50px;top:178.84px;font-size:12px;color:#222;transform:scaleX(0.9532);">S1</div>
<svg style="position:absolute;left:92px;top:181px;" width="9" height="5" viewBox="0 0 9 5"><polygon points="0,0 8,0 4,4.5" fill="#777"/></svg>
<div style="position:absolute;left:121px;top:179px;width:2px;height:2px;background:#a8a8a8;"></div>
<div style="position:absolute;left:121px;top:183.5px;width:2px;height:2px;background:#a8a8a8;"></div>
<div style="position:absolute;left:121px;top:188px;width:2px;height:2px;background:#a8a8a8;"></div>
<div style="position:absolute;left:137px;top:171px;width:110px;height:26px;box-sizing:border-box;border:1px solid #c6c6c6;background:#fff;"></div>
<svg style="position:absolute;left:151px;top:178px;" width="11" height="11" viewBox="0 0 11 11"><path d="M1 1 L10 10 M10 1 L1 10" stroke="#a6a6a6" stroke-width="1.3"/></svg>
<svg style="position:absolute;left:185px;top:178px;" width="14" height="11" viewBox="0 0 14 11"><path d="M1 6 L5 10 L13 1" fill="none" stroke="#c8c8c8" stroke-width="1.8"/></svg>
<div class="t" style="left:222px;top:176.5px;font-size:13px;font-family:'Liberation Serif',serif;font-style:italic;font-weight:700;color:#555;">f</div>
<div class="t" style="left:227.5px;top:180px;font-size:10px;font-family:'Liberation Serif',serif;font-style:italic;color:#555;">x</div>
<div style="position:absolute;left:250px;top:171px;width:1111px;height:26px;box-sizing:border-box;border:1px solid #c6c6c6;background:#fff;"></div>
<div class="t" style="left:261.50px;top:178.64px;font-size:12px;color:#222;transform:scaleX(1.0556);">SM</div>
<svg style="position:absolute;left:1348.0px;top:180.75px;" width="9" height="5.5" viewBox="0 0 9 5.5"><path d="M1 1 L4.5 4.5 L8 1" fill="none" stroke="#555" stroke-width="1.1"/></svg>
<div style="position:absolute;left:1348px;top:277px;width:15px;height:387px;background:#dadada;"></div>
<div style="position:absolute;left:1348px;top:209px;width:15px;height:15px;box-sizing:border-box;border:1px solid #ababab;background:#fff;"></div>
<svg style="position:absolute;left:1352px;top:214px;" width="7" height="4" viewBox="0 0 7 4"><polygon points="0,4 7,4 3.5,0" fill="#666"/></svg>
<div style="position:absolute;left:1348px;top:224px;width:15px;height:54px;box-sizing:border-box;border:1px solid #ababab;background:#fff;"></div>
<div style="position:absolute;left:1348px;top:664px;width:15px;height:15px;box-sizing:border-box;border:1px solid #ababab;background:#fff;"></div>
<svg style="position:absolute;left:1352px;top:670px;" width="7" height="4" viewBox="0 0 7 4"><polygon points="0,0 7,0 3.5,4" fill="#666"/></svg>
<div style="position:absolute;left:819px;top:686px;width:2px;height:2px;background:#9a9a9a;"></div>
<div style="position:absolute;left:819px;top:690.5px;width:2px;height:2px;background:#9a9a9a;"></div>
<div style="position:absolute;left:819px;top:695px;width:2px;height:2px;background:#9a9a9a;"></div>
<div style="position:absolute;left:851px;top:685px;width:18px;height:15px;background:#d2d2d2;"></div>
<div style="position:absolute;left:836px;top:685px;width:16px;height:15px;box-sizing:border-box;border:1px solid #ababab;background:#fff;"></div>
<svg style="position:absolute;left:840px;top:688px;" width="5" height="9" viewBox="0 0 5 9"><polygon points="5,0 5,9 0,4.5" fill="#666"/></svg>
<div style="position:absolute;left:868px;top:685px;width:462px;height:15px;box-sizing:border-box;border:1px solid #ababab;background:#fff;"></div>
<div style="position:absolute;left:1330px;top:685px;width:15px;height:15px;box-sizing:border-box;border:1px solid #ababab;background:#fff;"></div>
<svg style="position:absolute;left:1335px;top:688.5px;" width="5" height="8" viewBox="0 0 5 8"><polygon points="0,0 0,8 4.5,4" fill="#666"/></svg>
<svg style="position:absolute;left:26px;top:687px;" width="5" height="9" viewBox="0 0 5 9"><polygon points="5,0 5,9 0,4.5" fill="#b8b8b8"/></svg>
<svg style="position:absolute;left:55px;top:687px;" width="5" height="9" viewBox="0 0 5 9"><polygon points="0,0 0,9 5,4.5" fill="#b8b8b8"/></svg>
<div style="position:absolute;left:100px;top:678px;width:66px;height:25px;box-sizing:border-box;border:1px solid #c6c6c6;background:#fff;border-top:none;"></div>
<div style="position:absolute;left:100px;top:700px;width:66px;height:3px;background:#217346;"></div>
<div class="t" style="left:111.50px;top:684.80px;font-size:13px;color:#217346;font-weight:700;transform:scaleX(0.9967);">Sheet4</div>
<div class="t" style="left:178.00px;top:684.80px;font-size:13px;color:#444;transform:scaleX(0.9417);">Sheet3</div>
<div style="position:absolute;left:229px;top:682px;width:1px;height:20px;background:#a0a0a0;"></div>
<svg style="position:absolute;left:262px;top:683px;" width="18" height="18" viewBox="0 0 18 18"><circle cx="9" cy="9" r="7.6" fill="none" stroke="#7a7a7a" stroke-width="1.2"/><path d="M9 4.8 V13.2 M4.8 9 H13.2" stroke="#7a7a7a" stroke-width="1.5"/></svg>
<svg style="position:absolute;left:7px;top:710px;" width="17" height="14" viewBox="0 0 17 14"><rect x="1" y="1" width="13" height="11" fill="none" stroke="#555" stroke-width="1"/><path d="M1 3.5 H14 M3 6 H6 M3 8.5 H5.5" stroke="#555" stroke-width="1"/><circle cx="11" cy="9" r="3.8" fill="#f3f2f1" stroke="#555" stroke-width="1"/><circle cx="11" cy="9" r="1.8" fill="#555"/></svg>
<div class="t" style="left:964.00px;top:710.27px;font-size:11.5px;color:#444;transform:scaleX(0.9654);">Tổng số đếm: 303</div>
<div style="position:absolute;left:1072px;top:707px;width:40px;height:18px;background:#c8c6c4;"></div>
<svg style="position:absolute;left:1084px;top:709px;" width="15" height="15" viewBox="0 0 15 15"><rect x="1" y="1" width="13" height="13" fill="none" stroke="#222" stroke-width="1.4"/><path d="M5.3 1 V14 M9.7 1 V14 M1 5.3 H14 M1 9.7 H14" stroke="#222" stroke-width="1.4"/></svg>
<svg style="position:absolute;left:1124px;top:709px;" width="16" height="15" viewBox="0 0 16 15"><rect x="1" y="1" width="14" height="13" fill="none" stroke="#444" stroke-width="1.1"/><rect x="3.5" y="3.5" width="9" height="8" fill="none" stroke="#444" stroke-width="1"/><path d="M5.5 5.8 H10.5 M5.5 7.5 H10.5 M5.5 9.2 H10.5" stroke="#444" stroke-width="0.9"/></svg>
<svg style="position:absolute;left:1164px;top:709px;" width="16" height="15" viewBox="0 0 16 15"><path d="M1 1 H14.5 V14 H1 Z M1 7.5 H10 V1 M5.5 1 V7.5" fill="none" stroke="#444" stroke-width="1.1"/></svg>
<div style="position:absolute;left:1198px;top:716px;width:8px;height:1.2px;background:#444;"></div>
<div style="position:absolute;left:1211px;top:716.5px;width:100px;height:1px;background:#a0a0a0;"></div>
<div style="position:absolute;left:1261px;top:714px;width:1px;height:6px;background:#a0a0a0;"></div>
<div style="position:absolute;left:1251px;top:711px;width:5px;height:11px;background:#6e6e6e;"></div>
<svg style="position:absolute;left:1315px;top:712px;" width="10" height="10" viewBox="0 0 10 10"><path d="M5 0.5 V9.5 M0.5 5 H9.5" stroke="#444" stroke-width="1.2"/></svg>
<div class="t" style="left:1336.00px;top:709.87px;font-size:11.5px;color:#444;transform:scaleX(0.9552);">85%</div>
</body></html>
